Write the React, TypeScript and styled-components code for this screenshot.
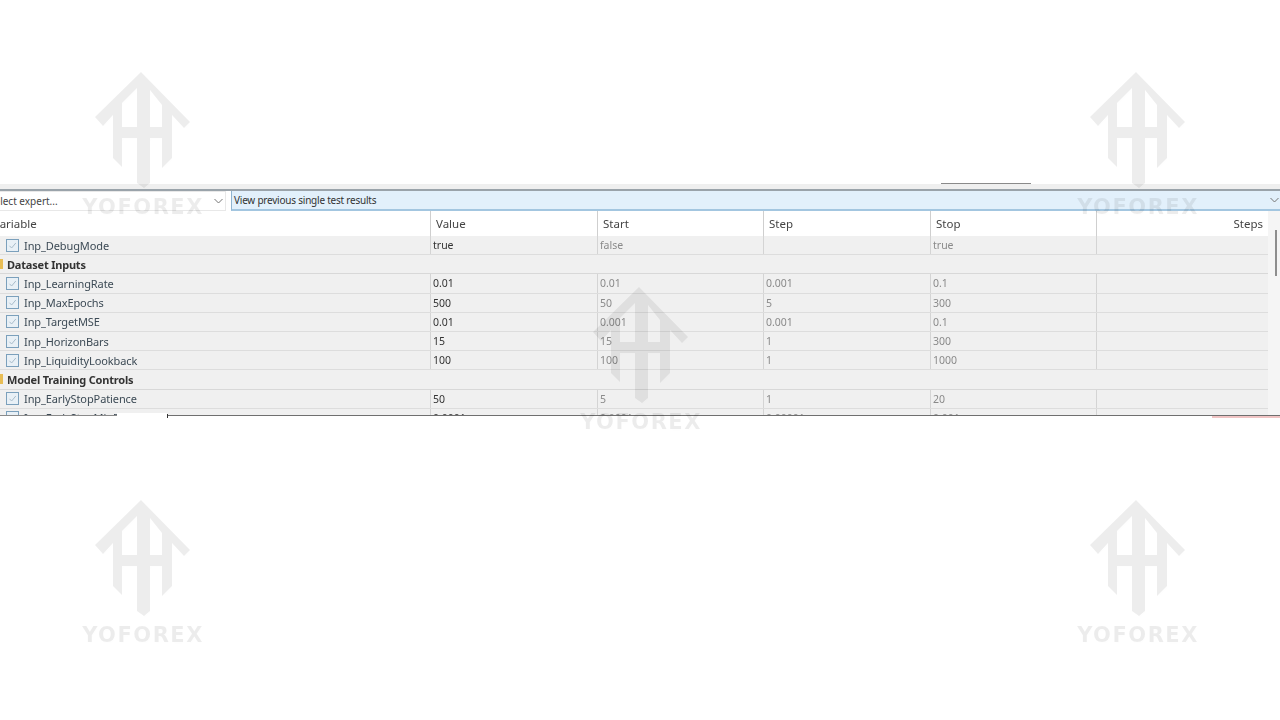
import React from "react";
import styled, { createGlobalStyle } from "styled-components";

const Global = createGlobalStyle`
  html, body { margin: 0; padding: 0; background: #fff; }
  body { font-family: "Noto Sans", "Open Sans", sans-serif; }
`;

const Page = styled.div`
  position: relative;
  width: 1280px;
  height: 720px;
  overflow: hidden;
  background: #fff;
  padding-top: 184px;
  box-sizing: border-box;
`;

const Panel = styled.div`
  width: 1280px;
  height: 231px;
  overflow: hidden;
  display: flex;
  flex-direction: column;
  filter: blur(0.6px);
  font-size: 11px;
  color: #333;
`;

const TopStrip = styled.div`
  height: 5px;
  background: #efefef;
  border-bottom: 2px solid #9aa3aa;
  flex: none;
`;

const Toolbar = styled.div`
  display: flex;
  height: 20px;
  flex: none;
  background: #fff;
`;

const SelectBox = styled.div`
  width: 242px;
  margin-left: -16px;
  margin-right: 5px;
  box-sizing: border-box;
  border: 1px solid #e8e8e8;
  display: flex;
  align-items: center;
  justify-content: space-between;
  padding: 0 1px 0 4px;
  font-size: 10px;
  flex: none;
  color: #444;
`;

const ResultBox = styled.div`
  flex: 1;
  background: #e2f0fb;
  border-left: 1px solid #8fb4d0;
  border-bottom: 2px solid #a3c6e0;
  display: flex;
  align-items: center;
  justify-content: space-between;
  padding: 0 0 0 2px;
  font-size: 10px;
  letter-spacing: -0.22px;
  color: #333;
`;

const Chevron = styled.svg`
  width: 9px;
  height: 6px;
  flex: none;
  margin-right: 1px;
`;

const TableWrap = styled.div`
  display: grid;
  grid-template-columns: 1268px 12px;
  flex: 1;
  min-height: 0;
`;

const Table = styled.div`
  display: flex;
  flex-direction: column;
  min-width: 0;
`;

const Header = styled.div`
  display: grid;
  grid-template-columns: 431px 167px 166px 167px 166px 171px;
  height: 25px;
  flex: none;
  background: #fff;
  font-size: 11.5px;
  color: #444;
`;

const HeadCell = styled.div<{ $right?: boolean; $clip?: boolean }>`
  display: flex;
  align-items: center;
  box-sizing: border-box;
  border-right: 1px solid #cfcfcf;
  justify-content: ${(p) => (p.$right ? "flex-end" : "flex-start")};
  padding: ${(p) => (p.$right ? "0 5px 0 0" : p.$clip ? "0" : "0 0 0 5px")};
  margin-left: ${(p) => (p.$clip ? "-7px" : "0")};
  &:last-child { border-right: none; }
`;

const Row = styled.div`
  display: grid;
  grid-template-columns: 431px 167px 166px 167px 166px 171px;
  height: 19.2px;
  flex: none;
  box-sizing: border-box;
  background: #f0f0f0;
  border-bottom: 1px solid #dddddd;
`;

const NameCell = styled.div`
  display: flex;
  align-items: center;
  box-sizing: border-box;
  border-right: 1px solid #d4d4d4;
  padding-left: 6px;
  gap: 5px;
  color: #3c4a55;
  letter-spacing: -0.1px;
`;

const Check = styled.span`
  width: 13px;
  height: 13px;
  box-sizing: border-box;
  border: 1px solid #7ba0bc;
  background: #e8f0f6;
  display: flex;
  align-items: center;
  justify-content: center;
  flex: none;
`;

const ValueCell = styled.div<{ $main?: boolean }>`
  display: flex;
  align-items: center;
  box-sizing: border-box;
  border-right: 1px solid #d4d4d4;
  padding-left: 2px;
  color: ${(p) => (p.$main ? "#333" : "#8a8a8a")};
  font-size: 10.5px;
  &:last-child { border-right: none; }
`;

const GroupRow = styled.div`
  height: 19.2px;
  flex: none;
  box-sizing: border-box;
  background: #f0f0f0;
  border-bottom: 1px solid #d8d8d8;
  display: flex;
  align-items: center;
  gap: 4px;
  font-weight: 700;
  letter-spacing: -0.2px;
  color: #333;
`;

const Folder = styled.span`
  width: 3px;
  height: 10px;
  background: #e8bd55;
  flex: none;
`;

const Scrollbar = styled.div`
  background: #f5f5f5;
  padding: 19px 3px 0 7px;
`;

const Thumb = styled.div`
  width: 2px;
  height: 46px;
  background: #8e8e8e;
`;

const BottomRule = styled.div`
  position: absolute;
  left: 167px;
  top: 415px;
  width: 1113px;
  height: 1px;
  background: #6f6f6f;
`;

const LeftRule = styled.div`
  position: absolute;
  left: 0;
  top: 415px;
  width: 117px;
  height: 1px;
  background: #8a8a8a;
`;

const Gap = styled.div`
  position: absolute;
  left: 117px;
  top: 413px;
  width: 50px;
  height: 3px;
  background: #fff;
`;

const Notch = styled.div`
  position: absolute;
  left: 167px;
  top: 414px;
  width: 1px;
  height: 4px;
  background: #333;
`;

const TopMark = styled.div`
  position: absolute;
  left: 941px;
  top: 183px;
  width: 90px;
  height: 1px;
  background: #8a8a8a;
`;

const RedMark = styled.div`
  position: absolute;
  left: 1212px;
  top: 416px;
  width: 68px;
  height: 2px;
  background: #f0c4c4;
`;

const Watermark = styled.div<{ $x: number; $y: number }>`
  position: absolute;
  left: ${(p) => p.$x}px;
  top: ${(p) => p.$y}px;
  width: 126px;
  display: flex;
  flex-direction: column;
  align-items: center;
  pointer-events: none;
  filter: blur(0.7px) drop-shadow(1px 2px 1px rgba(0, 0, 0, 0.04));
`;

const MarkLogo = styled.svg`
  width: 96px;
  height: 118px;
  flex: none;
`;

const MarkText = styled.div`
  margin-top: 4px;
  font-family: "DejaVu Sans", sans-serif;
  font-weight: 700;
  font-size: 21px;
  line-height: 26px;
  letter-spacing: 1.5px;
  color: rgba(0, 0, 0, 0.075);
  white-space: nowrap;
`;

const logoPath =
  "M46 0L95 50L89 56L77 43V86L67 96V66H55V111L49 116L42 111V66H27V95L18 86V43L8 54L0 45Z" +
  "M42 16L27 31V55H42Z M55 18V55H67V33Z";

const Logo = () => (
  <MarkLogo viewBox="0 0 96 118">
    <path d={logoPath} fillRule="evenodd" fill="rgba(0,0,0,0.07)" />
  </MarkLogo>
);

const Tick = () => (
  <svg width="9" height="9" viewBox="0 0 9 9">
    <path d="M1.5 4.8L3.6 7L7.8 2" fill="none" stroke="#a9bdcb" strokeWidth="1" />
  </svg>
);

type Param = { kind: "param"; name: string; vals: string[] };
type Group = { kind: "group"; name: string };

const rows: (Param | Group)[] = [
  { kind: "param", name: "Inp_DebugMode", vals: ["true", "false", "", "true"] },
  { kind: "group", name: "Dataset Inputs" },
  { kind: "param", name: "Inp_LearningRate", vals: ["0.01", "0.01", "0.001", "0.1"] },
  { kind: "param", name: "Inp_MaxEpochs", vals: ["500", "50", "5", "300"] },
  { kind: "param", name: "Inp_TargetMSE", vals: ["0.01", "0.001", "0.001", "0.1"] },
  { kind: "param", name: "Inp_HorizonBars", vals: ["15", "15", "1", "300"] },
  { kind: "param", name: "Inp_LiquidityLookback", vals: ["100", "100", "1", "1000"] },
  { kind: "group", name: "Model Training Controls" },
  { kind: "param", name: "Inp_EarlyStopPatience", vals: ["50", "5", "1", "20"] },
  { kind: "param", name: "Inp_EarlyStopMinDelta", vals: ["0.0001", "0.0001", "0.00001", "0.001"] },
];

const marks = [
  { x: 80, y: 72 },
  { x: 1075, y: 72 },
  { x: 578, y: 287 },
  { x: 80, y: 500 },
  { x: 1075, y: 500 },
];

export default function App() {
  return (
    <Page>
      <Global />
      <Panel>
        <TopStrip />
        <Toolbar>
          <SelectBox>
            <span>Select expert...</span>
            <Chevron viewBox="0 0 9 6">
              <path d="M0.5 1L4.5 5L8.5 1" fill="none" stroke="#777" />
            </Chevron>
          </SelectBox>
          <ResultBox>
            <span>View previous single test results</span>
            <Chevron viewBox="0 0 9 6">
              <path d="M0.5 1L4.5 5L8.5 1" fill="none" stroke="#777" />
            </Chevron>
          </ResultBox>
        </Toolbar>
        <TableWrap>
          <Table>
            <Header>
              <HeadCell $clip>Variable</HeadCell>
              <HeadCell>Value</HeadCell>
              <HeadCell>Start</HeadCell>
              <HeadCell>Step</HeadCell>
              <HeadCell>Stop</HeadCell>
              <HeadCell $right>Steps</HeadCell>
            </Header>
            {rows.map((r) =>
              r.kind === "group" ? (
                <GroupRow key={r.name}>
                  <Folder />
                  {r.name}
                </GroupRow>
              ) : (
                <Row key={r.name}>
                  <NameCell>
                    <Check>
                      <Tick />
                    </Check>
                    {r.name}
                  </NameCell>
                  {r.vals.map((v, i) => (
                    <ValueCell key={i} $main={i === 0}>
                      {v}
                    </ValueCell>
                  ))}
                  <ValueCell />
                </Row>
              )
            )}
          </Table>
          <Scrollbar>
            <Thumb />
          </Scrollbar>
        </TableWrap>
      </Panel>
      <TopMark />
      <LeftRule />
      <Gap />
      <BottomRule />
      <Notch />
      <RedMark />
      {marks.map((m) => (
        <Watermark key={`${m.x}-${m.y}`} $x={m.x} $y={m.y}>
          <Logo />
          <MarkText>YOFOREX</MarkText>
        </Watermark>
      ))}
    </Page>
  );
}
